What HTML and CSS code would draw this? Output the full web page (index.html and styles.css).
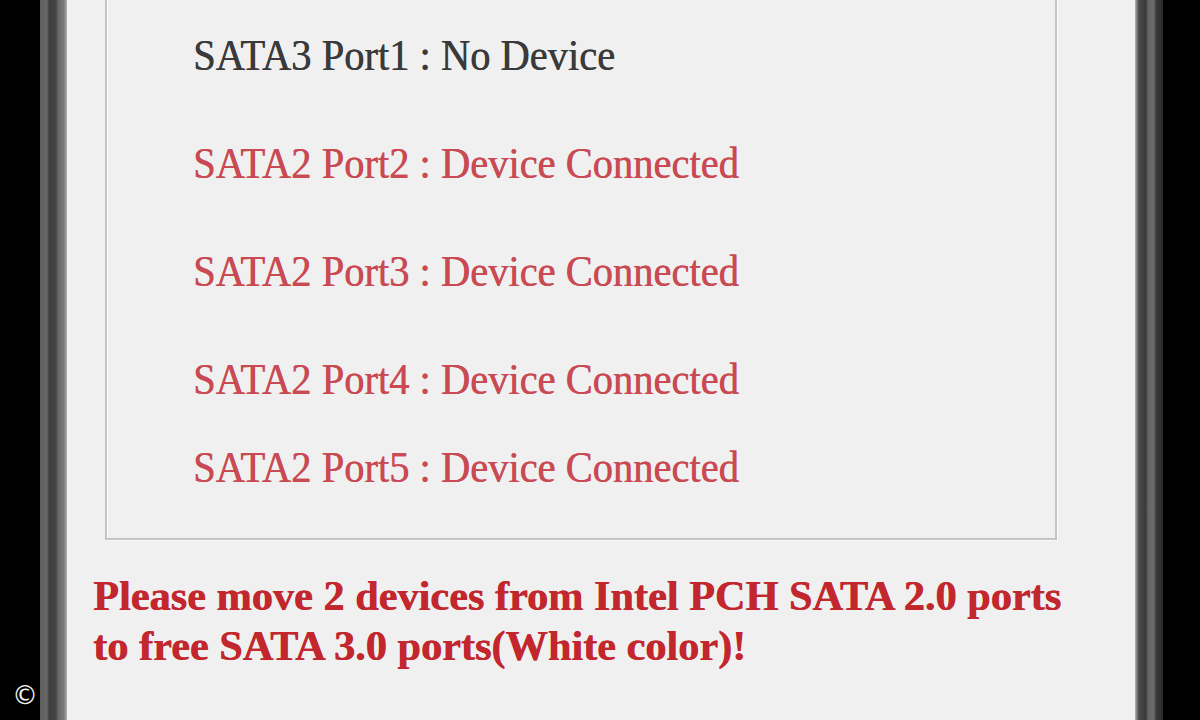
FILE: index.html
```html
<!DOCTYPE html>
<html>
<head>
<meta charset="utf-8">
<link rel="stylesheet" href="styles.css">
</head>
<body>
<div class="screen">
  <div class="bar bar-left"></div>
  <div class="panel">
    <div class="group">
      <div class="port black"><span>SATA3 Port1 : No Device</span></div>
      <div class="port red"><span>SATA2 Port2 : Device Connected</span></div>
      <div class="port red"><span>SATA2 Port3 : Device Connected</span></div>
      <div class="port red"><span>SATA2 Port4 : Device Connected</span></div>
      <div class="port red tight"><span>SATA2 Port5 : Device Connected</span></div>
    </div>
    <p class="warning">Please move 2 devices from Intel PCH SATA 2.0 ports<br>to free SATA 3.0 ports(White color)!</p>
  </div>
  <div class="bar bar-right"></div>
</div>
<div class="copyright">©</div>
</body>
</html>
```

FILE: styles.css
```css
html, body {
  margin: 0;
  padding: 0;
  background: #000;
  width: 1200px;
  height: 720px;
  overflow: hidden;
}

.screen {
  display: flex;
  height: 720px;
  padding-left: 40px;
}

.bar {
  flex: none;
  height: 720px;
}

.bar-left {
  width: 27px;
  background: linear-gradient(to right, #5e5e5e 0, #666 7px, #3e3e3e 9px, #454545 16px, #666 18px, #7a7a7a 24px, #b0b0b0 27px);
}

.bar-right {
  width: 28px;
  background: linear-gradient(to right, #b8b8b8 0, #7a7a7a 2px, #4a4a4a 4px, #3a3a3a 11px, #666 13px, #6a6a6a 19px, #3a3a3a 21px, #2a2a2a 28px);
}

.panel {
  flex: none;
  width: 1068px;
  height: 720px;
  background: #f0f0f0;
  overflow: hidden;
}

.group {
  box-sizing: border-box;
  margin: -10px 0 0 38px;
  width: 952px;
  border: 2px solid #c4c4c4;
  box-shadow: 1px 1px 0 #fbfbfb, inset 1px 1px 0 #fbfbfb;
  padding: 38px 0 46px 86px;
  display: flex;
  flex-direction: column;
  gap: 58px;
}

.port {
  font-family: "Liberation Serif", "Times New Roman", serif;
  font-size: 45px;
  line-height: 50px;
  height: 50px;
  white-space: nowrap;
}

.port span {
  display: inline-block;
  transform: scaleX(0.9);
  transform-origin: left center;
  text-shadow: 0.6px 0 0 currentColor;
}

.port.tight {
  margin-top: -20px;
}

.black {
  color: #3a3a3a;
}

.red {
  color: #c94a52;
}

.warning {
  margin: 31px 0 0 26px;
  font-family: "Liberation Serif", "Times New Roman", serif;
  font-weight: bold;
  font-size: 42.3px;
  line-height: 50px;
  color: #c2272e;
  white-space: nowrap;
  text-shadow: 0.6px 0 0 currentColor;
}

.copyright {
  position: absolute;
  left: 12px;
  top: 680px;
  color: #f2f2f2;
  font-family: "DejaVu Sans", sans-serif;
  font-size: 26px;
}
```
